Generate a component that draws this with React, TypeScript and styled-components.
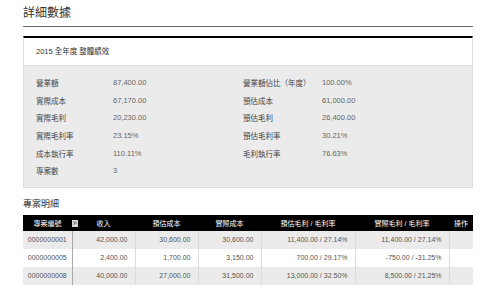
import React from 'react';
import styled, { createGlobalStyle } from 'styled-components';

const GlobalStyle = createGlobalStyle`
  html, body {
    margin: 0;
    padding: 0;
    background: #fff;
  }
  body {
    font-family: 'Liberation Sans', 'Noto Sans CJK TC', sans-serif;
    color: #444;
  }
`;

interface statPreset {
  label: string;
  value: string;
  label2?: string;
  value2?: string;
}

interface projectPreset {
  id: string;
  income: string;
  estCost: string;
  realCost: string;
  estProfit: string;
  realProfit: string;
}

const stats: statPreset[] = [
  { label: '營業額', value: '87,400.00', label2: '營業額佔比（年度）', value2: '100.00%' },
  { label: '實際成本', value: '67,170.00', label2: '預估成本', value2: '61,000.00' },
  { label: '實際毛利', value: '20,230.00', label2: '預估毛利', value2: '26,400.00' },
  { label: '實際毛利率', value: '23.15%', label2: '預估毛利率', value2: '30.21%' },
  { label: '成本執行率', value: '110.11%', label2: '毛利執行率', value2: '76.63%' },
  { label: '專案數', value: '3' },
];

const projects: projectPreset[] = [
  {
    id: '0000000001',
    income: '42,000.00',
    estCost: '30,600.00',
    realCost: '30,600.00',
    estProfit: '11,400.00 / 27.14%',
    realProfit: '11,400.00 / 27.14%',
  },
  {
    id: '0000000005',
    income: '2,400.00',
    estCost: '1,700.00',
    realCost: '3,150.00',
    estProfit: '700.00 / 29.17%',
    realProfit: '-750.00 / -31.25%',
  },
  {
    id: '0000000008',
    income: '40,000.00',
    estCost: '27,000.00',
    realCost: '31,500.00',
    estProfit: '13,000.00 / 32.50%',
    realProfit: '8,500.00 / 21.25%',
  },
];

const App: React.FC = (): JSX.Element => {
  return (
    <>
      <GlobalStyle />
      <StPage>
        <StTitle>詳細數據</StTitle>
        <StCard>
          <StCardHeader>2015 全年度 整體績效</StCardHeader>
          <StStats>
            {stats.map((row, index) => (
              <React.Fragment key={index}>
                <span className="label">{row.label}</span>
                <span className="value">{row.value}</span>
                <span className="label">{row.label2}</span>
                <span className="value">{row.value2}</span>
              </React.Fragment>
            ))}
          </StStats>
        </StCard>
        <StSubTitle>專案明細</StSubTitle>
        <StTable>
          <thead>
            <tr>
              <th>
                專案編號
                <StSortBtn>
                  <svg width="4" height="4" viewBox="0 0 4 4">
                    <path
                      d="M0.4 0.4 L1.9 2 L0.4 3.6 M2 0.4 L3.5 2 L2 3.6"
                      stroke="#444"
                      strokeWidth="0.7"
                      fill="none"
                    />
                  </svg>
                </StSortBtn>
              </th>
              <th>收入</th>
              <th>預估成本</th>
              <th>實際成本</th>
              <th>預估毛利 / 毛利率</th>
              <th>實際毛利 / 毛利率</th>
              <th>操作</th>
            </tr>
          </thead>
          <tbody>
            {projects.map((p) => (
              <tr key={p.id}>
                <td className="id">{p.id}</td>
                <td>{p.income}</td>
                <td>{p.estCost}</td>
                <td>{p.realCost}</td>
                <td>{p.estProfit}</td>
                <td>{p.realProfit}</td>
                <td></td>
              </tr>
            ))}
          </tbody>
        </StTable>
      </StPage>
    </>
  );
};

export default App;

const StPage = styled.div`
  width: 450px;
  padding: 6px 0 0 23px;
`;

const StTitle = styled.h1`
  margin: 0;
  font-size: 12px;
  font-weight: normal;
  line-height: 15px;
  color: #333;
  padding-bottom: 5px;
  border-bottom: 1px solid #666;
`;

const StCard = styled.div`
  margin-top: 9px;
  border: 1px solid #ddd;
  border-top: 2px solid #000;
`;

const StCardHeader = styled.div`
  height: 27px;
  line-height: 27px;
  padding-left: 12px;
  font-size: 7.5px;
  color: #333;
  background: #fff;
  border-bottom: 1px solid #e2e2e2;
`;

const StStats = styled.div`
  display: grid;
  grid-template-columns: 77px 130px 79px 1fr;
  grid-auto-rows: 17.6px;
  align-items: center;
  padding: 8px 0 7px 12px;
  background: #ebebeb;
  font-size: 7.5px;

  .label {
    color: #444;
  }

  .value {
    color: #666;
  }
`;

const StSubTitle = styled.h2`
  margin: 10px 0 5px 0;
  font-size: 9px;
  font-weight: normal;
  line-height: 12px;
  color: #333;
`;

const StSortBtn = styled.span`
  position: absolute;
  right: -6px;
  top: 5px;
  width: 6px;
  height: 7px;
  background: #d8d8d8;
  display: flex;
  align-items: center;
  justify-content: center;
  z-index: 1;
`;

const StTable = styled.table`
  width: 450px;
  border-collapse: collapse;
  table-layout: fixed;
  font-size: 7px;

  th {
    position: relative;
    height: 16px;
    padding: 0;
    background: #000;
    color: #fff;
    font-weight: normal;
    text-align: center;
  }

  th:nth-child(1) {
    width: 49px;
  }
  th:nth-child(2),
  th:nth-child(3),
  th:nth-child(4) {
    width: 63px;
  }
  th:nth-child(5),
  th:nth-child(6) {
    width: 94px;
  }

  td {
    height: 18px;
    padding: 0 7px 0 0;
    text-align: right;
    color: #555;
    border-left: 1px solid #dcdcdc;
  }

  td.id {
    text-align: center;
    padding: 0;
    border-left: 0;
  }

  td:nth-child(2) {
    border-left: 1px solid #aaa;
  }

  tbody tr:nth-child(odd) td {
    background: #ebebeb;
  }

  tbody tr:nth-child(even) td {
    background: #fff;
  }
`;
